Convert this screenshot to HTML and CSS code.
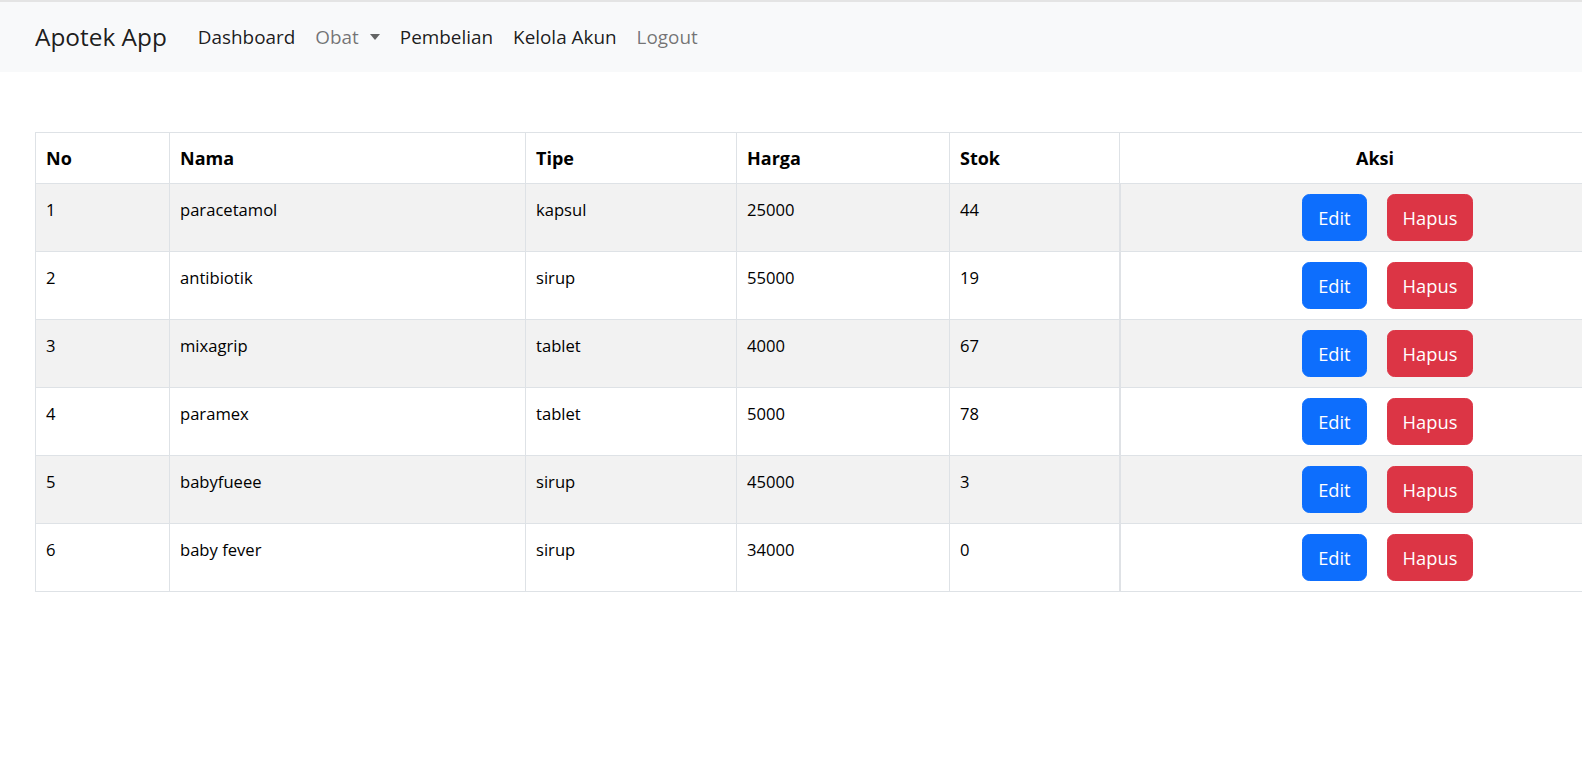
FILE: index.html
```html
<!DOCTYPE html>
<html lang="id">
<head>
<meta charset="utf-8">
<title>Apotek App</title>
<link rel="stylesheet" href="styles.css">
</head>
<body>
<nav class="navbar">
  <a class="brand" href="#">Apotek App</a>
  <ul class="nav">
    <li><a class="nav-link" href="#">Dashboard</a></li>
    <li><a class="nav-link muted dropdown" href="#">Obat</a></li>
    <li><a class="nav-link" href="#">Pembelian</a></li>
    <li><a class="nav-link" href="#">Kelola Akun</a></li>
    <li><a class="nav-link muted" href="#">Logout</a></li>
  </ul>
</nav>
<main class="content">
  <table class="table">
    <colgroup>
      <col class="c-no"><col class="c-nama"><col class="c-tipe"><col class="c-harga"><col class="c-stok"><col class="c-aksi">
    </colgroup>
    <thead>
      <tr><th>No</th><th>Nama</th><th>Tipe</th><th>Harga</th><th>Stok</th><th class="center">Aksi</th></tr>
    </thead>
    <tbody>
      <tr><td>1</td><td>paracetamol</td><td>kapsul</td><td>25000</td><td>44</td><td class="aksi"><a class="btn primary" href="#">Edit</a><button class="btn danger">Hapus</button></td></tr>
      <tr><td>2</td><td>antibiotik</td><td>sirup</td><td>55000</td><td>19</td><td class="aksi"><a class="btn primary" href="#">Edit</a><button class="btn danger">Hapus</button></td></tr>
      <tr><td>3</td><td>mixagrip</td><td>tablet</td><td>4000</td><td>67</td><td class="aksi"><a class="btn primary" href="#">Edit</a><button class="btn danger">Hapus</button></td></tr>
      <tr><td>4</td><td>paramex</td><td>tablet</td><td>5000</td><td>78</td><td class="aksi"><a class="btn primary" href="#">Edit</a><button class="btn danger">Hapus</button></td></tr>
      <tr><td>5</td><td>babyfueee</td><td>sirup</td><td>45000</td><td>3</td><td class="aksi"><a class="btn primary" href="#">Edit</a><button class="btn danger">Hapus</button></td></tr>
      <tr><td>6</td><td>baby fever</td><td>sirup</td><td>34000</td><td>0</td><td class="aksi"><a class="btn primary" href="#">Edit</a><button class="btn danger">Hapus</button></td></tr>
    </tbody>
  </table>
</main>
</body>
</html>
```

FILE: styles.css
```css
html, body {
  overflow: hidden;
}
body {
  margin: 0;
  border-top: 2px solid #e4e4e4;
  font-family: "Open Sans", "Noto Sans", sans-serif;
  color: #212529;
  background: #fff;
}
a { text-decoration: none; }

.navbar {
  display: flex;
  align-items: center;
  height: 70px;
  padding-left: 35px;
  background: #f8f9fa;
}
.brand {
  font-size: 24.4px;
  color: rgba(0,0,0,0.9);
  margin-right: 21px;
  line-height: 1;
}
.nav {
  display: flex;
  list-style: none;
  margin: 0;
  padding: 0;
}
.nav-link {
  display: flex;
  align-items: center;
  padding: 0 10px;
  font-size: 18.9px;
  color: rgba(0,0,0,0.9);
}
.nav-link.muted {
  color: rgba(0,0,0,0.55);
}
.dropdown::after {
  content: "";
  margin-left: 11px;
  border-top: 6px solid rgba(0,0,0,0.6);
  border-left: 5.5px solid transparent;
  border-right: 5.5px solid transparent;
}

.content {
  padding: 60px 0 0 35px;
}
.table {
  border-collapse: collapse;
  table-layout: fixed;
  width: 1595px;
}
.c-no { width: 134px; }
.c-nama { width: 356px; }
.c-tipe { width: 211px; }
.c-harga { width: 213px; }
.c-stok { width: 170px; }
.c-aksi { width: 511px; }

.table th, .table td {
  border: 1px solid #dee2e6;
  text-align: left;
  color: #000;
}
.table th {
  padding: 10px 10px;
  font-size: 18px;
  font-weight: 700;
  line-height: 30px;
}
.table th.center {
  text-align: center;
}
.table td {
  padding: 12px 10px 8px;
  font-size: 16.6px;
  line-height: 27px;
  vertical-align: top;
}
.table tbody tr:nth-child(odd) td {
  background: #f2f2f2;
}
.table td.aksi {
  padding: 10px 10px 10px 35px;
  text-align: center;
  border-left: 2px solid #dfe2e6;
}
.btn {
  display: inline-block;
  box-sizing: border-box;
  height: 47px;
  padding: 0 15px;
  border: 1px solid transparent;
  border-radius: 7.5px;
  font-family: inherit;
  font-size: 18.3px;
  line-height: 45px;
  color: #fff;
  vertical-align: top;
  cursor: pointer;
}
.btn.primary {
  background: #0d6efd;
  border-color: #0d6efd;
  margin-right: 20px;
}
.btn.danger {
  background: #dc3545;
  border-color: #dc3545;
}
```
